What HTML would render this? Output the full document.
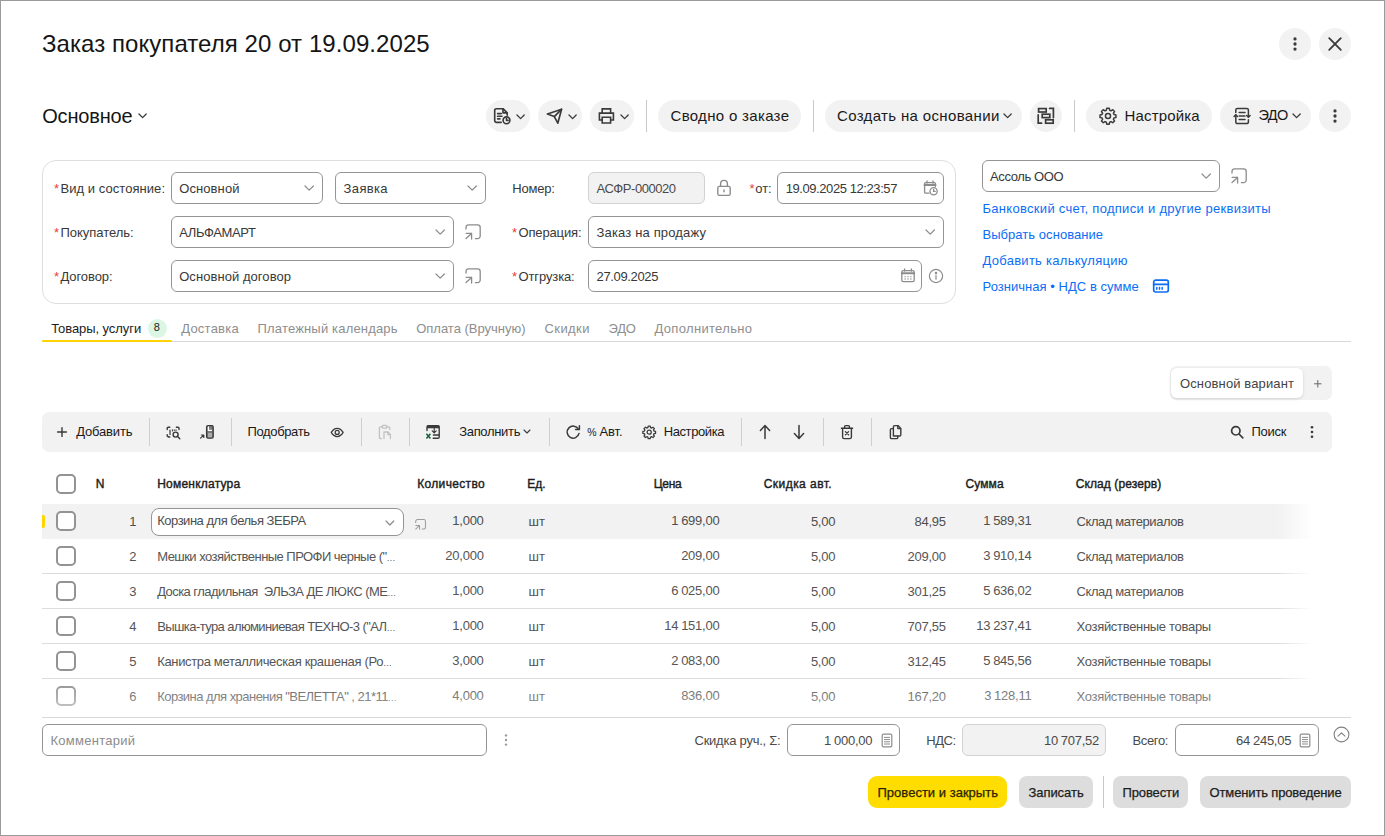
<!DOCTYPE html>
<html lang="ru"><head><meta charset="utf-8"><title>Заказ покупателя 20 от 19.09.2025</title>
<style>
html,body{margin:0;padding:0;background:#fff;}
body{width:1385px;height:836px;overflow:hidden;font-family:"Liberation Sans",Arial,sans-serif;}
#app{position:relative;width:1385px;height:836px;background:#fff;overflow:hidden;}
#app>*{position:absolute;box-sizing:border-box;}
.t{white-space:pre;line-height:1;display:block;}
.i{display:block;overflow:visible;}
.pill{background:#f2f2f2;border-radius:16px;}
.fld{background:#fff;border:1px solid #959595;border-radius:6px;}
.fld.ro{background:#f2f2f2;border-color:#d2d2d2;}
.sep{background:#c8c8c8;width:1px;}
.btn{background:#dddddd;border-radius:8px;}
.cb{border:2px solid #939393;border-radius:5px;background:#fff;}
.hl{background:#dcdcdc;height:1px;}
.num{word-spacing:-0.5px;letter-spacing:-0.25px;}
.el{font-size:9px;letter-spacing:-0.4px;}
</style></head>
<body>
<div id="app">
<span id="t0" class="t" style="top:31.68px;font-size:24px;color:#151515;left:41.90px;letter-spacing:0.073px;">Заказ покупателя 20 от 19.09.2025</span>
<div class="pill" style="left:1279px;top:28px;width:32px;height:32px;"></div>
<div class="pill" style="left:1319px;top:28px;width:32px;height:32px;"></div>
<svg class="i" style="left:1287px;top:36px" width="16" height="16" viewBox="0 0 16 16" fill="#3a3a3a" stroke="none" stroke-width="1.5" stroke-linecap="round" stroke-linejoin="round" ><circle cx="8" cy="2.9" r="1.65"/><circle cx="8" cy="8" r="1.65"/><circle cx="8" cy="13.1" r="1.65"/></svg>
<svg class="i" style="left:1327px;top:36px" width="16" height="16" viewBox="0 0 16 16" fill="none" stroke="#3a3a3a" stroke-width="1.8" stroke-linecap="round" stroke-linejoin="round" ><path d="M2.2 2.2 L13.8 13.8 M13.8 2.2 L2.2 13.8"/></svg>
<span id="t1" class="t" style="top:106.07px;font-size:20px;color:#151515;left:42.20px;letter-spacing:-0.163px;">Основное</span>
<svg class="i" style="left:137.5px;top:113.2px" width="9.2" height="5.6" viewBox="0 0 9.2 5.6" fill="none" stroke="#3a3a3a" stroke-width="1.3" stroke-linecap="round" stroke-linejoin="round" ><path d="M1 1 L4.6 4.6 L8.2 1"/></svg>
<div class="pill" style="left:486px;top:100px;width:44px;height:32px;"></div>
<div class="pill" style="left:538px;top:100px;width:44px;height:32px;"></div>
<div class="pill" style="left:590px;top:100px;width:44px;height:32px;"></div>
<div class="pill" style="left:658px;top:100px;width:143px;height:32px;"></div>
<div class="pill" style="left:825px;top:100px;width:197px;height:32px;"></div>
<div class="pill" style="left:1030px;top:100px;width:32px;height:32px;"></div>
<div class="pill" style="left:1086px;top:100px;width:126px;height:32px;"></div>
<div class="pill" style="left:1220px;top:100px;width:91px;height:32px;"></div>
<div class="pill" style="left:1319px;top:100px;width:32px;height:32px;"></div>
<div class="sep" style="left:646px;top:100px;width:1px;height:32px;"></div>
<div class="sep" style="left:813px;top:100px;width:1px;height:32px;"></div>
<div class="sep" style="left:1074px;top:100px;width:1px;height:32px;"></div>
<svg class="i" style="left:515.5px;top:113.8px" width="9.2" height="5.6" viewBox="0 0 9.2 5.6" fill="none" stroke="#3a3a3a" stroke-width="1.3" stroke-linecap="round" stroke-linejoin="round" ><path d="M1 1 L4.6 4.6 L8.2 1"/></svg>
<svg class="i" style="left:567.5px;top:113.8px" width="9.2" height="5.6" viewBox="0 0 9.2 5.6" fill="none" stroke="#3a3a3a" stroke-width="1.3" stroke-linecap="round" stroke-linejoin="round" ><path d="M1 1 L4.6 4.6 L8.2 1"/></svg>
<svg class="i" style="left:619.5px;top:113.8px" width="9.2" height="5.6" viewBox="0 0 9.2 5.6" fill="none" stroke="#3a3a3a" stroke-width="1.3" stroke-linecap="round" stroke-linejoin="round" ><path d="M1 1 L4.6 4.6 L8.2 1"/></svg>
<svg class="i" style="left:493px;top:107px" width="18" height="18" viewBox="0 0 18 18" fill="none" stroke="#3a3a3a" stroke-width="1.65" stroke-linecap="round" stroke-linejoin="round" ><path d="M8.2 15.3 H3.4 a1.7 1.7 0 0 1 -1.7 -1.7 V3.4 a1.7 1.7 0 0 1 1.7 -1.7 H10 l4.2 4.2 V8.2"/><path d="M10 1.9 V5.9 H14"/><path d="M4.6 6.6 H8.2 M4.6 9.2 H9 M4.6 11.8 H7"/><circle cx="13.5" cy="13.3" r="3.4"/><path d="M13.5 11.5 V13.4 H15.1"/></svg>
<svg class="i" style="left:546px;top:107px" width="18" height="18" viewBox="0 0 18 18" fill="none" stroke="#3a3a3a" stroke-width="1.65" stroke-linecap="round" stroke-linejoin="round" ><path d="M1.4 7 L15.6 2.2 L11.8 16.2 L8.3 9.6 Z"/><path d="M8.3 9.6 L15.4 2.4"/></svg>
<svg class="i" style="left:597px;top:107px" width="19" height="18" viewBox="0 0 19 18" fill="none" stroke="#3a3a3a" stroke-width="1.6" stroke-linecap="round" stroke-linejoin="miter"><path d="M5.2 5.8 V1.9 H13.6 V5.8"/><path d="M5 13 H2.4 V6.1 H16.4 V13 H13.8"/><path d="M5.2 10.2 H13.6 V16 H5.2 Z"/></svg>
<span id="t2" class="t" style="top:107.90px;font-size:15px;color:#1a1a1a;left:670.50px;letter-spacing:0.318px;">Сводно о заказе</span>
<span id="t3" class="t" style="top:107.90px;font-size:15px;color:#1a1a1a;left:837.00px;letter-spacing:0.351px;">Создать на основании</span>
<svg class="i" style="left:1003.1px;top:113.4px" width="9.2" height="5.6" viewBox="0 0 9.2 5.6" fill="none" stroke="#3a3a3a" stroke-width="1.3" stroke-linecap="round" stroke-linejoin="round" ><path d="M1 1 L4.6 4.6 L8.2 1"/></svg>
<svg class="i" style="left:1037px;top:107px" width="18" height="18" viewBox="0 0 18 18" fill="none" stroke="#3a3a3a" stroke-width="1.7" stroke-linecap="round" stroke-linejoin="miter"><rect x="1.6" y="1.6" width="7.6" height="3.4"/><rect x="5.2" y="7.2" width="7.6" height="3.4"/><rect x="8.6" y="12.8" width="7.6" height="3.4"/><path d="M1.2 7.8 V16.2 H4.6"/><path d="M12.6 1.4 H16.4 V10.6"/></svg>
<svg class="i" style="left:1099px;top:107px" width="18" height="18" viewBox="0 0 24 24" fill="none" stroke="#3a3a3a" stroke-width="2" stroke-linecap="round" stroke-linejoin="round" ><path d="M10.3 1.7 h3.4 l.5 2.6 1.9 .8 2.2 -1.5 2.4 2.4 -1.5 2.2 .8 1.9 2.6 .5 v3.4 l-2.6 .5 -.8 1.9 1.5 2.2 -2.4 2.4 -2.2 -1.5 -1.9 .8 -.5 2.6 h-3.4 l-.5 -2.6 -1.9 -.8 -2.2 1.5 -2.4 -2.4 1.5 -2.2 -.8 -1.9 -2.6 -.5 v-3.4 l2.6 -.5 .8 -1.9 -1.5 -2.2 2.4 -2.4 2.2 1.5 1.9 -.8 z"/><circle cx="12" cy="12" r="3.4"/></svg>
<span id="t4" class="t" style="top:107.90px;font-size:15px;color:#1a1a1a;left:1124.50px;letter-spacing:0.157px;">Настройка</span>
<svg class="i" style="left:1233px;top:107px" width="18" height="18" viewBox="0 0 18 18" fill="none" stroke="#3a3a3a" stroke-width="1.5" stroke-linecap="round" stroke-linejoin="round" ><path d="M2.8 5.4 V3.1 a1.6 1.6 0 0 1 1.6 -1.6 H13.8 a1.6 1.6 0 0 1 1.6 1.6 V10"/><path d="M13.7 8.5 L15.4 10.2 L17.1 8.5"/><path d="M15.4 12.8 V15 a1.6 1.6 0 0 1 -1.6 1.6 H4.4 a1.6 1.6 0 0 1 -1.6 -1.6 V8"/><path d="M1.1 9.5 L2.8 7.8 L4.5 9.5"/><path d="M6.2 5.6 H12 M6.2 9 H12 M6.2 12.4 H12"/></svg>
<span id="t5" class="t" style="top:108.33px;font-size:14.5px;color:#1a1a1a;left:1258.60px;letter-spacing:-0.723px;">ЭДО</span>
<svg class="i" style="left:1292.3px;top:113.4px" width="9.2" height="5.6" viewBox="0 0 9.2 5.6" fill="none" stroke="#3a3a3a" stroke-width="1.3" stroke-linecap="round" stroke-linejoin="round" ><path d="M1 1 L4.6 4.6 L8.2 1"/></svg>
<svg class="i" style="left:1327px;top:108px" width="16" height="16" viewBox="0 0 16 16" fill="#3a3a3a" stroke="none" stroke-width="1.5" stroke-linecap="round" stroke-linejoin="round" ><circle cx="8" cy="2.9" r="1.65"/><circle cx="8" cy="8" r="1.65"/><circle cx="8" cy="13.1" r="1.65"/></svg>
<div class="" style="left:42px;top:160px;width:914px;height:144px;border:1px solid #dedede;border-radius:14px;"></div>
<span id="t6" class="t" style="top:181.80px;font-size:13px;color:#e8403a;left:54.00px;">*</span>
<span id="t7" class="t" style="top:181.50px;font-size:13px;color:#383838;left:60.50px;letter-spacing:0.050px;">Вид и состояние:</span>
<span id="t8" class="t" style="top:225.80px;font-size:13px;color:#e8403a;left:54.00px;">*</span>
<span id="t9" class="t" style="top:225.50px;font-size:13px;color:#383838;left:60.50px;letter-spacing:-0.027px;">Покупатель:</span>
<span id="t10" class="t" style="top:269.80px;font-size:13px;color:#e8403a;left:54.00px;">*</span>
<span id="t11" class="t" style="top:269.50px;font-size:13px;color:#383838;left:60.50px;letter-spacing:-0.100px;">Договор:</span>
<div class="fld" style="left:171px;top:172px;width:152px;height:32px;"></div>
<span id="t12" class="t" style="top:181.50px;font-size:13px;color:#383838;left:179.20px;letter-spacing:0.099px;">Основной</span>
<svg class="i" style="left:304px;top:185px" width="10.4" height="6.2" viewBox="0 0 10.4 6.2" fill="none" stroke="#8c8c8c" stroke-width="1.2" stroke-linecap="round" stroke-linejoin="round" ><path d="M1 1 L5.2 5.2 L9.4 1"/></svg>
<div class="fld" style="left:335px;top:172px;width:151px;height:32px;"></div>
<span id="t13" class="t" style="top:181.50px;font-size:13px;color:#383838;left:343.60px;letter-spacing:0.353px;">Заявка</span>
<svg class="i" style="left:467px;top:185px" width="10.4" height="6.2" viewBox="0 0 10.4 6.2" fill="none" stroke="#8c8c8c" stroke-width="1.2" stroke-linecap="round" stroke-linejoin="round" ><path d="M1 1 L5.2 5.2 L9.4 1"/></svg>
<div class="fld" style="left:171px;top:216px;width:283px;height:32px;"></div>
<span id="t14" class="t" style="top:225.50px;font-size:13px;color:#383838;left:179.20px;letter-spacing:-0.379px;">АЛЬФАМАРТ</span>
<svg class="i" style="left:434.8px;top:229px" width="10.4" height="6.2" viewBox="0 0 10.4 6.2" fill="none" stroke="#8c8c8c" stroke-width="1.2" stroke-linecap="round" stroke-linejoin="round" ><path d="M1 1 L5.2 5.2 L9.4 1"/></svg>
<svg class="i" style="left:465px;top:224px" width="16" height="16" viewBox="0 0 16 16" fill="none" stroke="#8c8c8c" stroke-width="1.3" stroke-linecap="round" stroke-linejoin="round" ><path d="M1 5 V3.4 a2.6 2.6 0 0 1 2.6 -2.6 H12.6 a2.6 2.6 0 0 1 2.6 2.6 V12 a2.6 2.6 0 0 1 -2.6 2.6 H10.4"/><path d="M1 14.6 L6.6 9.4 M1.2 9.4 H6.6 V15"/></svg>
<div class="fld" style="left:171px;top:260px;width:283px;height:32px;"></div>
<span id="t15" class="t" style="top:269.50px;font-size:13px;color:#383838;left:179.20px;letter-spacing:0.057px;">Основной договор</span>
<svg class="i" style="left:434.8px;top:273px" width="10.4" height="6.2" viewBox="0 0 10.4 6.2" fill="none" stroke="#8c8c8c" stroke-width="1.2" stroke-linecap="round" stroke-linejoin="round" ><path d="M1 1 L5.2 5.2 L9.4 1"/></svg>
<svg class="i" style="left:465px;top:268px" width="16" height="16" viewBox="0 0 16 16" fill="none" stroke="#8c8c8c" stroke-width="1.3" stroke-linecap="round" stroke-linejoin="round" ><path d="M1 5 V3.4 a2.6 2.6 0 0 1 2.6 -2.6 H12.6 a2.6 2.6 0 0 1 2.6 2.6 V12 a2.6 2.6 0 0 1 -2.6 2.6 H10.4"/><path d="M1 14.6 L6.6 9.4 M1.2 9.4 H6.6 V15"/></svg>
<span id="t16" class="t" style="top:181.50px;font-size:13px;color:#383838;left:512.20px;letter-spacing:-0.168px;">Номер:</span>
<div class="fld ro" style="left:588px;top:172px;width:117px;height:32px;"></div>
<span id="t17" class="t" style="top:181.50px;font-size:13px;color:#4a4a4a;left:596.50px;letter-spacing:-0.455px;">АСФР-000020</span>
<svg class="i" style="left:716px;top:179px" width="16" height="18" viewBox="0 0 16 18" fill="none" stroke="#8c8c8c" stroke-width="1.4" stroke-linecap="round" stroke-linejoin="round" ><rect x="1.8" y="7.4" width="12.4" height="9" rx="1.6"/><path d="M4.6 7.2 V4.8 a3.4 3.4 0 0 1 6.8 0 V7.2"/><path d="M8 11 V12.8"/></svg>
<span id="t18" class="t" style="top:181.80px;font-size:13px;color:#e8403a;left:749.50px;">*</span>
<span id="t19" class="t" style="top:181.50px;font-size:13px;color:#383838;left:755.20px;">от:</span>
<div class="fld" style="left:777px;top:172px;width:167px;height:32px;"></div>
<span id="t20" class="t" style="top:181.50px;font-size:13px;color:#383838;left:785.70px;letter-spacing:-0.421px;">19.09.2025 12:23:57</span>
<svg class="i" style="left:923px;top:180px" width="16" height="16" viewBox="0 0 16 16" fill="none" stroke="#8c8c8c" stroke-width="1.3" stroke-linecap="round" stroke-linejoin="round" ><path d="M6 13.2 H2.6 a1 1 0 0 1 -1 -1 V3.6 a1 1 0 0 1 1 -1 H11.4 a1 1 0 0 1 1 1 V6.4"/><path d="M1.6 5 H12.4" stroke-width="2.2"/><path d="M4 1 V3 M10 1 V3"/><circle cx="10.6" cy="11.2" r="3.6" fill="#fff"/><path d="M10.6 9.4 V11.4 H12.2"/></svg>
<span id="t21" class="t" style="top:225.80px;font-size:13px;color:#e8403a;left:512.00px;">*</span>
<span id="t22" class="t" style="top:225.50px;font-size:13px;color:#383838;left:518.50px;letter-spacing:-0.150px;">Операция:</span>
<div class="fld" style="left:588px;top:216px;width:356px;height:32px;"></div>
<span id="t23" class="t" style="top:225.50px;font-size:13px;color:#383838;left:596.50px;letter-spacing:0.159px;">Заказ на продажу</span>
<svg class="i" style="left:924.8px;top:229px" width="10.4" height="6.2" viewBox="0 0 10.4 6.2" fill="none" stroke="#8c8c8c" stroke-width="1.2" stroke-linecap="round" stroke-linejoin="round" ><path d="M1 1 L5.2 5.2 L9.4 1"/></svg>
<span id="t24" class="t" style="top:269.80px;font-size:13px;color:#e8403a;left:512.00px;">*</span>
<span id="t25" class="t" style="top:269.50px;font-size:13px;color:#383838;left:518.50px;letter-spacing:-0.121px;">Отгрузка:</span>
<div class="fld" style="left:588px;top:260px;width:334px;height:32px;"></div>
<span id="t26" class="t" style="top:269.50px;font-size:13px;color:#383838;left:596.50px;letter-spacing:-0.342px;">27.09.2025</span>
<svg class="i" style="left:900px;top:268px" width="16" height="15" viewBox="0 0 16 15" fill="none" stroke="#8c8c8c" stroke-width="1.3" stroke-linecap="round" stroke-linejoin="round" ><rect x="1.8" y="2.6" width="12.4" height="11" rx="1.4"/><path d="M1.8 5.2 H14.2" stroke-width="2"/><path d="M4.6 1 V3 M11.4 1 V3"/><path d="M4.6 8.6 h1 M7.5 8.6 h1 M10.4 8.6 h1 M4.6 11 h1 M7.5 11 h1 M10.4 11 h1" stroke-width="1.3" stroke-linecap="butt"/></svg>
<svg class="i" style="left:928px;top:268px" width="16" height="16" viewBox="0 0 16 16" fill="none" stroke="#8c8c8c" stroke-width="1.2" stroke-linecap="round" stroke-linejoin="round" ><circle cx="8" cy="8" r="6.6"/><path d="M8 7.4 V11.2"/><circle cx="8" cy="5" r=".6" fill="#8c8c8c"/></svg>
<div class="fld" style="left:982px;top:160px;width:238px;height:32px;"></div>
<span id="t27" class="t" style="top:169.50px;font-size:13px;color:#383838;left:990.00px;letter-spacing:-0.375px;">Ассоль ООО</span>
<svg class="i" style="left:1201px;top:173px" width="10.4" height="6.2" viewBox="0 0 10.4 6.2" fill="none" stroke="#8c8c8c" stroke-width="1.2" stroke-linecap="round" stroke-linejoin="round" ><path d="M1 1 L5.2 5.2 L9.4 1"/></svg>
<svg class="i" style="left:1231px;top:168px" width="16" height="16" viewBox="0 0 16 16" fill="none" stroke="#8c8c8c" stroke-width="1.3" stroke-linecap="round" stroke-linejoin="round" ><path d="M1 5 V3.4 a2.6 2.6 0 0 1 2.6 -2.6 H12.6 a2.6 2.6 0 0 1 2.6 2.6 V12 a2.6 2.6 0 0 1 -2.6 2.6 H10.4"/><path d="M1 14.6 L6.6 9.4 M1.2 9.4 H6.6 V15"/></svg>
<span id="t28" class="t" style="top:201.60px;font-size:13px;color:#0b6ef5;left:982.50px;letter-spacing:0.297px;">Банковский счет, подписи и другие реквизиты</span>
<span id="t29" class="t" style="top:227.80px;font-size:13px;color:#0b6ef5;left:982.50px;letter-spacing:0.045px;">Выбрать основание</span>
<span id="t30" class="t" style="top:254.00px;font-size:13px;color:#0b6ef5;left:982.50px;letter-spacing:0.275px;">Добавить калькуляцию</span>
<span id="t31" class="t" style="top:280.20px;font-size:13px;color:#0b6ef5;left:982.50px;letter-spacing:0.042px;">Розничная • НДС в сумме</span>
<svg class="i" style="left:1152px;top:279px" width="18" height="15" viewBox="0 0 18 15" fill="none" stroke="#0b6ef5" stroke-width="1.7" stroke-linecap="round" stroke-linejoin="round" ><rect x="1.7" y="1.2" width="14.6" height="11.8" rx="1.9"/><path d="M1.7 5.4 H16.3" stroke-width="1.7"/><path d="M4.8 8.6 v1.6 M7.5 8.6 v1.6 M10.2 8.6 v1.6" stroke-width="1.5"/></svg>
<div class="" style="left:42px;top:341px;width:1309px;height:1px;background:#d9d9d9;"></div>
<div class="" style="left:42px;top:340px;width:130px;height:2px;background:#ffd400;border-radius:1px;"></div>
<span id="t32" class="t" style="top:322.00px;font-size:13px;color:#1c1c1c;left:51.20px;letter-spacing:-0.069px;">Товары, услуги</span>
<div class="" style="left:147.5px;top:318.5px;width:19.5px;height:19.5px;background:#dbf7e3;border-radius:10px;"></div>
<span id="t33" class="t" style="top:322.49px;font-size:11px;color:#1c1c1c;left:153.80px;">8</span>
<span id="t34" class="t" style="top:322.00px;font-size:13px;color:#8e8e8e;left:181.20px;letter-spacing:0.239px;">Доставка</span>
<span id="t35" class="t" style="top:322.00px;font-size:13px;color:#8e8e8e;left:257.50px;letter-spacing:0.174px;">Платежный календарь</span>
<span id="t36" class="t" style="top:322.00px;font-size:13px;color:#8e8e8e;left:416.20px;letter-spacing:-0.010px;">Оплата (Вручную)</span>
<span id="t37" class="t" style="top:322.00px;font-size:13px;color:#8e8e8e;left:544.50px;letter-spacing:0.425px;">Скидки</span>
<span id="t38" class="t" style="top:322.00px;font-size:13px;color:#8e8e8e;left:608.60px;letter-spacing:-0.314px;">ЭДО</span>
<span id="t39" class="t" style="top:322.00px;font-size:13px;color:#8e8e8e;left:654.50px;letter-spacing:0.327px;">Дополнительно</span>
<div class="" style="left:1170px;top:366px;width:162px;height:34px;background:#f2f2f2;border-radius:7px;"></div>
<div class="" style="left:1171px;top:367.5px;width:132px;height:30.5px;background:#fff;border-radius:6px;box-shadow:0 1px 3px rgba(0,0,0,.14);"></div>
<span id="t40" class="t" style="top:377.00px;font-size:13px;color:#444;left:1180.00px;letter-spacing:0.129px;">Основной вариант</span>
<svg class="i" style="left:1314px;top:379.6px" width="7.6" height="7.6" viewBox="0 0 7.6 7.6" fill="none" stroke="#666" stroke-width="1" stroke-linecap="round" stroke-linejoin="round" ><path d="M3.8 .5 V7.1 M.5 3.8 H7.1"/></svg>
<div class="" style="left:42px;top:412px;width:1290px;height:40px;background:#f2f2f2;border-radius:7px;"></div>
<div class="sep" style="left:149px;top:418px;width:1px;height:28px;background:#cfcfcf;"></div>
<div class="sep" style="left:231px;top:418px;width:1px;height:28px;background:#cfcfcf;"></div>
<div class="sep" style="left:361px;top:418px;width:1px;height:28px;background:#cfcfcf;"></div>
<div class="sep" style="left:409px;top:418px;width:1px;height:28px;background:#cfcfcf;"></div>
<div class="sep" style="left:549px;top:418px;width:1px;height:28px;background:#cfcfcf;"></div>
<div class="sep" style="left:741px;top:418px;width:1px;height:28px;background:#cfcfcf;"></div>
<div class="sep" style="left:823px;top:418px;width:1px;height:28px;background:#cfcfcf;"></div>
<div class="sep" style="left:871px;top:418px;width:1px;height:28px;background:#cfcfcf;"></div>
<svg class="i" style="left:57px;top:427.4px" width="10" height="10" viewBox="0 0 10 10" fill="none" stroke="#3a3a3a" stroke-width="1.4" stroke-linecap="round" stroke-linejoin="round" ><path d="M5 .6 V9.4 M.6 5 H9.4"/></svg>
<span id="t41" class="t" style="top:425.30px;font-size:13px;color:#1a1a1a;left:76.20px;letter-spacing:-0.165px;">Добавить</span>
<svg class="i" style="left:166px;top:426.4px" width="16" height="14" viewBox="0 0 16 14" fill="none" stroke="#3a3a3a" stroke-width="1.4" stroke-linecap="round" stroke-linejoin="round" ><path d="M1.2 3.6 V2.2 a1 1 0 0 1 1 -1 H3.8 M10.4 1.2 H12 a1 1 0 0 1 1 1 V3.6 M1.2 8.6 V10 a1 1 0 0 1 1 1 H3.8"/><path d="M4 4 V8.4" stroke-width="1.2"/><path d="M6.4 3.8 V5 M8.2 3.8 V4.6 M10 3.8 V4.6" stroke-width="1"/><circle cx="9.6" cy="8.6" r="2.5"/><path d="M11.6 10.6 L13.8 12.8"/></svg>
<svg class="i" style="left:199px;top:424px" width="16" height="16" viewBox="0 0 16 16" fill="none" stroke="#3a3a3a" stroke-width="1.3" stroke-linecap="round" stroke-linejoin="round" ><rect x="7.6" y="1.6" width="6.6" height="12.6" rx="1.4" fill="#7a7a7a"/><path d="M9.4 3 V6.4 H12.4" stroke="#fff" stroke-width="1.3"/><path d="M10 9.4 V13 M12 9.4 V13" stroke="#ddd" stroke-width="1"/><path d="M1.6 14.2 L4.6 11.2 M2.4 11 H4.8 V13.4" stroke-width="1.2"/></svg>
<span id="t42" class="t" style="top:425.30px;font-size:13px;color:#1a1a1a;left:247.50px;letter-spacing:-0.369px;">Подобрать</span>
<svg class="i" style="left:330px;top:426.6px" width="14.4" height="10.8" viewBox="0 0 16 12" fill="none" stroke="#3a3a3a" stroke-width="1.4" stroke-linecap="round" stroke-linejoin="round" ><path d="M1.4 6 C3.4 2.6 5.8 1.4 8 1.4 S12.6 2.6 14.6 6 C12.6 9.4 10.2 10.6 8 10.6 S3.4 9.4 1.4 6 Z"/><circle cx="8" cy="6" r="2.2"/></svg>
<svg class="i" style="left:378px;top:424px" width="14" height="16" viewBox="0 0 14 16" fill="none" stroke="#c2c2c2" stroke-width="1.3" stroke-linecap="round" stroke-linejoin="round" ><path d="M4.4 2.8 H2.6 a1.2 1.2 0 0 0 -1.2 1.2 V13.4 a1.2 1.2 0 0 0 1.2 1.2 H3.4"/><path d="M8.8 2.8 H10.6 a1.2 1.2 0 0 1 1.2 1.2 V5.4"/><rect x="4.4" y="1.4" width="4.4" height="2.8" rx=".8"/><path d="M6 14.6 V8 H10 L12.4 10.4 V14.6"/><path d="M9.8 8.2 V10.6 H12.2"/></svg>
<svg class="i" style="left:425px;top:424px" width="16" height="16" viewBox="0 0 16 16" fill="none" stroke="#3a3a3a" stroke-width="1.4" stroke-linecap="round" stroke-linejoin="round" ><path d="M2 6.6 V3 a1.2 1.2 0 0 1 1.2 -1.2 H13 a1.2 1.2 0 0 1 1.2 1.2 V13 a1.2 1.2 0 0 1 -1.2 1.2 H8.2" stroke-width="1.4"/><path d="M2 3 H14.2" stroke-width="2.6" stroke-linecap="butt"/><path d="M9.2 4.6 V8.6 M7.2 6.8 L9.2 8.8 L11.2 6.8" stroke-width="1.2"/><path d="M8.4 11 H13.8" stroke-width="1.4"/><path d="M1.4 9.8 L5.4 14.4 M5.4 9.8 L1.4 14.4" stroke="#17603a" stroke-width="1.5" stroke-linecap="butt"/></svg>
<span id="t43" class="t" style="top:425.30px;font-size:13px;color:#1a1a1a;left:459.20px;letter-spacing:-0.316px;">Заполнить</span>
<svg class="i" style="left:523px;top:429.4px" width="8" height="5" viewBox="0 0 8 5" fill="none" stroke="#3a3a3a" stroke-width="1.1" stroke-linecap="round" stroke-linejoin="round" ><path d="M1 1 L4 4 L7 1"/></svg>
<svg class="i" style="left:565px;top:424px" width="16" height="16" viewBox="0 0 16 16" fill="none" stroke="#3a3a3a" stroke-width="1.5" stroke-linecap="round" stroke-linejoin="round" ><path d="M13.4 5.2 A6 6 0 1 0 14 9.4"/><path d="M14.4 1.8 V5.6 H10.6" /></svg>
<span id="t44" class="t" style="top:427.31px;font-size:10.5px;color:#1a1a1a;left:587.20px;">%</span>
<span id="t45" class="t" style="top:425.30px;font-size:13px;color:#1a1a1a;left:599.40px;letter-spacing:-0.074px;">Авт.</span>
<svg class="i" style="left:642px;top:424.6px" width="14.4" height="14.4" viewBox="0 0 24 24" fill="none" stroke="#3a3a3a" stroke-width="2.1" stroke-linecap="round" stroke-linejoin="round" ><path d="M10.3 1.7 h3.4 l.5 2.6 1.9 .8 2.2 -1.5 2.4 2.4 -1.5 2.2 .8 1.9 2.6 .5 v3.4 l-2.6 .5 -.8 1.9 1.5 2.2 -2.4 2.4 -2.2 -1.5 -1.9 .8 -.5 2.6 h-3.4 l-.5 -2.6 -1.9 -.8 -2.2 1.5 -2.4 -2.4 1.5 -2.2 -.8 -1.9 -2.6 -.5 v-3.4 l2.6 -.5 .8 -1.9 -1.5 -2.2 2.4 -2.4 2.2 1.5 1.9 -.8 z"/><circle cx="12" cy="12" r="3.4"/></svg>
<span id="t46" class="t" style="top:425.30px;font-size:13px;color:#1a1a1a;left:663.70px;letter-spacing:-0.400px;">Настройка</span>
<svg class="i" style="left:759px;top:424px" width="12" height="16" viewBox="0 0 12 16" fill="none" stroke="#3a3a3a" stroke-width="1.5" stroke-linecap="round" stroke-linejoin="round" ><path d="M6 14.6 V1.8 M1.4 6.4 L6 1.6 L10.6 6.4"/></svg>
<svg class="i" style="left:793px;top:424px" width="12" height="16" viewBox="0 0 12 16" fill="none" stroke="#3a3a3a" stroke-width="1.5" stroke-linecap="round" stroke-linejoin="round" ><path d="M6 1.4 V14.2 M1.4 9.6 L6 14.4 L10.6 9.6"/></svg>
<svg class="i" style="left:840px;top:424px" width="14" height="16" viewBox="0 0 14 16" fill="none" stroke="#3a3a3a" stroke-width="1.4" stroke-linecap="round" stroke-linejoin="round" ><path d="M1.4 4.2 H12.6"/><path d="M4.6 4 V2.6 a1 1 0 0 1 1 -1 H8.4 a1 1 0 0 1 1 1 V4"/><path d="M2.6 4.4 V13 a1.6 1.6 0 0 0 1.6 1.6 H9.8 a1.6 1.6 0 0 0 1.6 -1.6 V4.4"/><path d="M5.4 7.6 L8.6 10.8 M8.6 7.6 L5.4 10.8" stroke-width="1.3"/></svg>
<svg class="i" style="left:888.6px;top:424px" width="13" height="16" viewBox="0 0 13 16" fill="none" stroke="#3a3a3a" stroke-width="1.4" stroke-linecap="round" stroke-linejoin="round" ><path d="M4.4 12 V2.8 a1.2 1.2 0 0 1 1.2 -1.2 H9 L11.8 4.4 V10.8 a1.2 1.2 0 0 1 -1.2 1.2 Z"/><path d="M8.8 1.8 V4.6 H11.6"/><path d="M4.2 4.6 H2.6 a1.2 1.2 0 0 0 -1.2 1.2 V13.4 a1.2 1.2 0 0 0 1.2 1.2 H7.6 a1.2 1.2 0 0 0 1.2 -1.2 V12.2"/></svg>
<svg class="i" style="left:1230px;top:425px" width="14" height="14" viewBox="0 0 14 14" fill="none" stroke="#3a3a3a" stroke-width="1.7" stroke-linecap="round" stroke-linejoin="round" ><circle cx="5.8" cy="5.8" r="4.2"/><path d="M9 9 L12.8 12.8"/></svg>
<span id="t47" class="t" style="top:425.30px;font-size:13px;color:#1a1a1a;left:1251.50px;letter-spacing:-0.258px;">Поиск</span>
<svg class="i" style="left:1308px;top:424px" width="8" height="16" viewBox="0 0 8 16" fill="#3a3a3a" stroke="none" stroke-width="1.5" stroke-linecap="round" stroke-linejoin="round" ><circle cx="4" cy="3.2" r="1.3"/><circle cx="4" cy="8" r="1.3"/><circle cx="4" cy="12.8" r="1.3"/></svg>
<div class="cb" style="left:56.25px;top:474.25px;width:19.5px;height:19.5px;"></div>
<span id="t48" class="t" style="top:478.14px;font-size:12px;color:#1c1c1c;left:95.80px;-webkit-text-stroke:0.4px #1c1c1c;">N</span>
<span id="t49" class="t" style="top:478.14px;font-size:12px;color:#1c1c1c;left:157.20px;letter-spacing:0.224px;-webkit-text-stroke:0.4px #1c1c1c;">Номенклатура</span>
<span id="t50" class="t" style="top:478.14px;font-size:12px;color:#1c1c1c;left:417.20px;letter-spacing:0.339px;-webkit-text-stroke:0.4px #1c1c1c;">Количество</span>
<span id="t51" class="t" style="top:478.14px;font-size:12px;color:#1c1c1c;left:527.20px;-webkit-text-stroke:0.4px #1c1c1c;">Ед.</span>
<span id="t52" class="t" style="top:478.14px;font-size:12px;color:#1c1c1c;left:653.70px;letter-spacing:-0.286px;-webkit-text-stroke:0.4px #1c1c1c;">Цена</span>
<span id="t53" class="t" style="top:478.14px;font-size:12px;color:#1c1c1c;left:763.70px;letter-spacing:0.456px;-webkit-text-stroke:0.4px #1c1c1c;">Скидка авт.</span>
<span id="t54" class="t" style="top:478.14px;font-size:12px;color:#1c1c1c;left:965.40px;letter-spacing:0.145px;-webkit-text-stroke:0.4px #1c1c1c;">Сумма</span>
<span id="t55" class="t" style="top:478.14px;font-size:12px;color:#1c1c1c;left:1075.70px;letter-spacing:0.097px;-webkit-text-stroke:0.4px #1c1c1c;">Склад (резерв)</span>
<div class="" style="left:42px;top:504px;width:1290px;height:35px;background:#f2f2f2;"></div>
<div class="hl" style="left:42px;top:573px;width:1290px;height:1px;"></div>
<div class="hl" style="left:42px;top:608px;width:1290px;height:1px;"></div>
<div class="hl" style="left:42px;top:643px;width:1290px;height:1px;"></div>
<div class="hl" style="left:42px;top:678px;width:1290px;height:1px;"></div>
<div class="" style="left:42px;top:515px;width:3px;height:13px;background:#ffd400;border-radius:0 2px 2px 0;"></div>
<div class="cb" style="left:56.25px;top:511.25px;width:19.5px;height:19.5px;"></div>
<span id="t56" class="t" style="top:515.00px;font-size:13px;color:#4e4e4e;right:1248.50px;">1</span>
<div class="fld" style="left:151px;top:508px;width:253px;height:28px;border-radius:8px;"></div>
<svg class="i" style="left:384.8px;top:520.3px" width="9.8" height="6" viewBox="0 0 9.8 6" fill="none" stroke="#8c8c8c" stroke-width="1.2" stroke-linecap="round" stroke-linejoin="round" ><path d="M1 1 L4.9 5 L8.8 1"/></svg>
<svg class="i" style="left:414.5px;top:518.6px" width="11" height="11" viewBox="0 0 16 16" fill="none" stroke="#9c9c9c" stroke-width="1.5" stroke-linecap="round" stroke-linejoin="round" ><path d="M1 5 V3.4 a2.6 2.6 0 0 1 2.6 -2.6 H12.6 a2.6 2.6 0 0 1 2.6 2.6 V12 a2.6 2.6 0 0 1 -2.6 2.6 H10.4"/><path d="M1 14.6 L6.6 9.4 M1.2 9.4 H6.6 V15"/></svg>
<span id="t57" class="t" style="top:514.20px;font-size:13px;color:#4e4e4e;left:157.20px;letter-spacing:-0.482px;">Корзина для белья ЗЕБРА</span>
<span id="t58" class="t num" style="top:514.00px;font-size:13px;color:#4e4e4e;right:901.40px;">1,000</span>
<span id="t59" class="t" style="top:515.00px;font-size:13px;color:#4e4e4e;left:528.50px;">шт</span>
<span id="t60" class="t num" style="top:514.00px;font-size:13px;color:#4e4e4e;right:665.60px;">1 699,00</span>
<span id="t61" class="t num" style="top:515.00px;font-size:13px;color:#4e4e4e;right:549.80px;">5,00</span>
<span id="t62" class="t num" style="top:515.00px;font-size:13px;color:#4e4e4e;right:439.20px;">84,95</span>
<span id="t63" class="t num" style="top:514.00px;font-size:13px;color:#4e4e4e;right:353.60px;">1 589,31</span>
<span id="t64" class="t" style="top:515.00px;font-size:13px;color:#4e4e4e;left:1076.50px;letter-spacing:-0.417px;">Склад материалов</span>
<div class="cb" style="left:56.25px;top:546.25px;width:19.5px;height:19.5px;"></div>
<span id="t65" class="t" style="top:550.00px;font-size:13px;color:#555;right:1248.50px;">2</span>
<span id="t66" class="t" style="top:550.00px;font-size:13px;color:#555;left:157.20px;letter-spacing:-0.536px;">Мешки хозяйственные ПРОФИ черные ("<span class="el">…</span></span>
<span id="t67" class="t num" style="top:549.00px;font-size:13px;color:#555;right:901.40px;">20,000</span>
<span id="t68" class="t" style="top:550.00px;font-size:13px;color:#555;left:528.50px;">шт</span>
<span id="t69" class="t num" style="top:549.00px;font-size:13px;color:#555;right:665.60px;">209,00</span>
<span id="t70" class="t num" style="top:550.00px;font-size:13px;color:#555;right:549.80px;">5,00</span>
<span id="t71" class="t num" style="top:550.00px;font-size:13px;color:#555;right:439.20px;">209,00</span>
<span id="t72" class="t num" style="top:549.00px;font-size:13px;color:#555;right:353.60px;">3 910,14</span>
<span id="t73" class="t" style="top:550.00px;font-size:13px;color:#555;left:1076.50px;letter-spacing:-0.417px;">Склад материалов</span>
<div class="cb" style="left:56.25px;top:581.25px;width:19.5px;height:19.5px;"></div>
<span id="t74" class="t" style="top:585.00px;font-size:13px;color:#555;right:1248.50px;">3</span>
<span id="t75" class="t" style="top:585.00px;font-size:13px;color:#555;left:157.20px;letter-spacing:-0.557px;">Доска гладильная  ЭЛЬЗА ДЕ ЛЮКС (МЕ<span class="el">…</span></span>
<span id="t76" class="t num" style="top:584.00px;font-size:13px;color:#555;right:901.40px;">1,000</span>
<span id="t77" class="t" style="top:585.00px;font-size:13px;color:#555;left:528.50px;">шт</span>
<span id="t78" class="t num" style="top:584.00px;font-size:13px;color:#555;right:665.60px;">6 025,00</span>
<span id="t79" class="t num" style="top:585.00px;font-size:13px;color:#555;right:549.80px;">5,00</span>
<span id="t80" class="t num" style="top:585.00px;font-size:13px;color:#555;right:439.20px;">301,25</span>
<span id="t81" class="t num" style="top:584.00px;font-size:13px;color:#555;right:353.60px;">5 636,02</span>
<span id="t82" class="t" style="top:585.00px;font-size:13px;color:#555;left:1076.50px;letter-spacing:-0.417px;">Склад материалов</span>
<div class="cb" style="left:56.25px;top:616.25px;width:19.5px;height:19.5px;"></div>
<span id="t83" class="t" style="top:620.00px;font-size:13px;color:#555;right:1248.50px;">4</span>
<span id="t84" class="t" style="top:620.00px;font-size:13px;color:#555;left:157.20px;letter-spacing:-0.586px;">Вышка-тура алюминиевая ТЕХНО-3 ("АЛ<span class="el">…</span></span>
<span id="t85" class="t num" style="top:619.00px;font-size:13px;color:#555;right:901.40px;">1,000</span>
<span id="t86" class="t" style="top:620.00px;font-size:13px;color:#555;left:528.50px;">шт</span>
<span id="t87" class="t num" style="top:619.00px;font-size:13px;color:#555;right:665.60px;">14 151,00</span>
<span id="t88" class="t num" style="top:620.00px;font-size:13px;color:#555;right:549.80px;">5,00</span>
<span id="t89" class="t num" style="top:620.00px;font-size:13px;color:#555;right:439.20px;">707,55</span>
<span id="t90" class="t num" style="top:619.00px;font-size:13px;color:#555;right:353.60px;">13 237,41</span>
<span id="t91" class="t" style="top:620.00px;font-size:13px;color:#555;left:1076.50px;letter-spacing:-0.304px;">Хозяйственные товары</span>
<div class="cb" style="left:56.25px;top:651.25px;width:19.5px;height:19.5px;"></div>
<span id="t92" class="t" style="top:655.00px;font-size:13px;color:#555;right:1248.50px;">5</span>
<span id="t93" class="t" style="top:655.00px;font-size:13px;color:#555;left:157.20px;letter-spacing:-0.343px;">Канистра металлическая крашеная (Ро<span class="el">…</span></span>
<span id="t94" class="t num" style="top:654.00px;font-size:13px;color:#555;right:901.40px;">3,000</span>
<span id="t95" class="t" style="top:655.00px;font-size:13px;color:#555;left:528.50px;">шт</span>
<span id="t96" class="t num" style="top:654.00px;font-size:13px;color:#555;right:665.60px;">2 083,00</span>
<span id="t97" class="t num" style="top:655.00px;font-size:13px;color:#555;right:549.80px;">5,00</span>
<span id="t98" class="t num" style="top:655.00px;font-size:13px;color:#555;right:439.20px;">312,45</span>
<span id="t99" class="t num" style="top:654.00px;font-size:13px;color:#555;right:353.60px;">5 845,56</span>
<span id="t100" class="t" style="top:655.00px;font-size:13px;color:#555;left:1076.50px;letter-spacing:-0.304px;">Хозяйственные товары</span>
<div class="cb" style="left:56.25px;top:686.25px;width:19.5px;height:19.5px;"></div>
<span id="t101" class="t" style="top:690.00px;font-size:13px;color:#555;right:1248.50px;">6</span>
<span id="t102" class="t" style="top:690.00px;font-size:13px;color:#555;left:157.20px;letter-spacing:-0.540px;">Корзина для хранения "ВЕЛЕТТА" , 21*11<span class="el">…</span></span>
<span id="t103" class="t num" style="top:689.00px;font-size:13px;color:#555;right:901.40px;">4,000</span>
<span id="t104" class="t" style="top:690.00px;font-size:13px;color:#555;left:528.50px;">шт</span>
<span id="t105" class="t num" style="top:689.00px;font-size:13px;color:#555;right:665.60px;">836,00</span>
<span id="t106" class="t num" style="top:690.00px;font-size:13px;color:#555;right:549.80px;">5,00</span>
<span id="t107" class="t num" style="top:690.00px;font-size:13px;color:#555;right:439.20px;">167,20</span>
<span id="t108" class="t num" style="top:689.00px;font-size:13px;color:#555;right:353.60px;">3 128,11</span>
<span id="t109" class="t" style="top:690.00px;font-size:13px;color:#555;left:1076.50px;letter-spacing:-0.304px;">Хозяйственные товары</span>
<div class="" style="left:1277px;top:500px;width:36px;height:217px;background:linear-gradient(to right,rgba(255,255,255,0),#fff);"></div>
<div class="" style="left:1313px;top:500px;width:38px;height:217px;background:#fff;"></div>
<div class="" style="left:42px;top:682px;width:1309px;height:35px;background:linear-gradient(to bottom,rgba(255,255,255,0),rgba(255,255,255,.6));"></div>
<div class="" style="left:42px;top:717px;width:1309px;height:1px;background:#d9d9d9;"></div>
<div class="fld" style="left:42px;top:724px;width:445px;height:32px;"></div>
<span id="t110" class="t" style="top:734.00px;font-size:13px;color:#8c8c8c;left:50.50px;letter-spacing:0.261px;">Комментарий</span>
<svg class="i" style="left:502px;top:732px" width="8" height="16" viewBox="0 0 8 16" fill="#9a9a9a" stroke="none" stroke-width="1.5" stroke-linecap="round" stroke-linejoin="round" ><circle cx="4" cy="3.4" r="1.2"/><circle cx="4" cy="8" r="1.2"/><circle cx="4" cy="12.6" r="1.2"/></svg>
<span id="t111" class="t" style="top:734.00px;font-size:13px;color:#4a4a4a;left:694.50px;letter-spacing:-0.241px;">Скидка руч., Σ:</span>
<div class="fld" style="left:787px;top:724px;width:113px;height:32px;"></div>
<span id="t112" class="t num" style="top:734.00px;font-size:13px;color:#4a4a4a;right:512.80px;">1 000,00</span>
<svg class="i" style="left:880.6px;top:733px" width="12" height="15" viewBox="0 0 12 15" fill="none" stroke="#8c8c8c" stroke-width="1.2" stroke-linecap="round" stroke-linejoin="round" ><rect x="1.2" y="1.2" width="9.6" height="12.6" rx="1.4"/><path d="M3.4 4.4 H8.6 M3.4 6.6 H8.6 M3.4 8.8 H8.6 M3.4 11 H8.6" stroke-width="1"/></svg>
<span id="t113" class="t" style="top:734.00px;font-size:13px;color:#4a4a4a;left:926.20px;letter-spacing:-0.401px;">НДС:</span>
<div class="fld ro" style="left:962px;top:724px;width:144px;height:32px;"></div>
<span id="t114" class="t num" style="top:734.00px;font-size:13px;color:#4a4a4a;right:286.00px;">10 707,52</span>
<span id="t115" class="t" style="top:734.00px;font-size:13px;color:#4a4a4a;left:1132.40px;letter-spacing:-0.341px;">Всего:</span>
<div class="fld" style="left:1175px;top:724px;width:144px;height:32px;"></div>
<span id="t116" class="t num" style="top:734.00px;font-size:13px;color:#4a4a4a;right:93.80px;">64 245,05</span>
<svg class="i" style="left:1299.4px;top:733px" width="12" height="15" viewBox="0 0 12 15" fill="none" stroke="#8c8c8c" stroke-width="1.2" stroke-linecap="round" stroke-linejoin="round" ><rect x="1.2" y="1.2" width="9.6" height="12.6" rx="1.4"/><path d="M3.4 4.4 H8.6 M3.4 6.6 H8.6 M3.4 8.8 H8.6 M3.4 11 H8.6" stroke-width="1"/></svg>
<svg class="i" style="left:1332.5px;top:726px" width="17" height="17" viewBox="0 0 17 17" fill="none" stroke="#808080" stroke-width="1.1" stroke-linecap="round" stroke-linejoin="round" ><circle cx="8.5" cy="8.5" r="7.4"/><path d="M5 10.2 L8.5 6.8 L12 10.2"/></svg>
<div class="" style="left:868px;top:776px;width:139px;height:32px;background:#ffdd00;border-radius:9px;"></div>
<span id="t117" class="t" style="top:786.00px;font-size:13px;color:#2a2400;left:877.50px;letter-spacing:0.018px;-webkit-text-stroke:0.25px #2a2400;">Провести и закрыть</span>
<div class="btn" style="left:1019px;top:776px;width:74px;height:32px;"></div>
<span id="t118" class="t" style="top:786.00px;font-size:13px;color:#1c1c1c;left:1028.40px;letter-spacing:-0.038px;-webkit-text-stroke:0.25px #1c1c1c;">Записать</span>
<div class="sep" style="left:1103px;top:776px;width:1px;height:32px;"></div>
<div class="btn" style="left:1113px;top:776px;width:75px;height:32px;"></div>
<span id="t119" class="t" style="top:786.00px;font-size:13px;color:#1c1c1c;left:1122.40px;letter-spacing:-0.102px;-webkit-text-stroke:0.25px #1c1c1c;">Провести</span>
<div class="btn" style="left:1200px;top:776px;width:151px;height:32px;"></div>
<span id="t120" class="t" style="top:786.00px;font-size:13px;color:#1c1c1c;left:1209.60px;letter-spacing:-0.145px;-webkit-text-stroke:0.25px #1c1c1c;">Отменить проведение</span>
<div class="" style="left:0px;top:0px;width:1385px;height:836px;border:1px solid #9b9b9b;pointer-events:none;"></div>
</div>
</body></html>
